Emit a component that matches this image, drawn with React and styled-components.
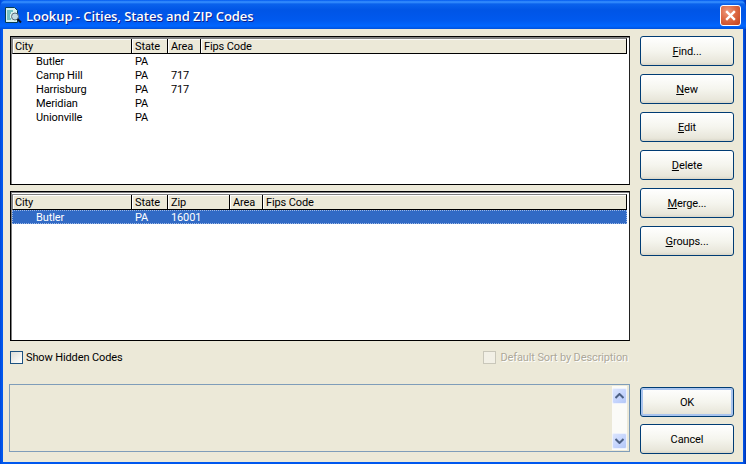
import React from 'react'
import styled, { createGlobalStyle } from 'styled-components'

const Global = createGlobalStyle`
  html, body { margin: 0; padding: 0; background: #0055e5; }
  * { box-sizing: border-box; }
`

const Window = styled.div`
  width: 746px;
  height: 464px;
  display: flex;
  flex-direction: column;
  overflow: hidden;
  font-family: Roboto, "Liberation Sans", Arial, sans-serif;
  font-size: 11px;
  letter-spacing: -0.12px;
  color: #000;
  background: linear-gradient(90deg, #0047d8 0, #0058ee 2px, #0058ee 743px, #0032b0 746px);
`

const TitleBar = styled.div`
  height: 29px;
  flex: none;
  display: flex;
  align-items: center;
  padding: 2px 5px 0 5px;
  border-radius: 7px 7px 0 0;
  background: linear-gradient(180deg, #0058ee 0, #3a93ff 2px, #0a62ec 4px, #0055e6 10px, #0059ee 20px, #0066ff 26px, #0051dc 29px);
`

const TitleText = styled.span`
  margin-left: 4px;
  flex: 1;
  color: #fff;
  font-family: "Open Sans", sans-serif;
  font-size: 13px;
  font-weight: 600;
  letter-spacing: -0.05px;
  text-shadow: 1px 1px 0 #0f1f8a;
`

const CloseButton = styled.div`
  width: 21px;
  height: 21px;
  display: flex;
  align-items: center;
  justify-content: center;
  border: 1px solid #fff;
  border-radius: 3px;
  background: radial-gradient(circle at 35% 30%, #ef9a7e 0, #dd6a44 45%, #c2401c 100%);
`

const Body = styled.div`
  flex: 1;
  margin: 0 3px 3px;
  padding: 7px 9px 8px 7px;
  display: flex;
  gap: 10px;
  background: #ece9d8;
`

const LeftColumn = styled.div`
  width: 620px;
  display: flex;
  flex-direction: column;
`

const RightColumn = styled.div`
  width: 94px;
  display: flex;
  flex-direction: column;
  gap: 8px;
`

const ListBox = styled.div`
  height: ${p => p.$h}px;
  margin-bottom: ${p => p.$mb}px;
  border: 1px solid #000;
  border-right-color: #222;
  background: #fff;
  padding: ${p => p.$pt}px 2px 0 1px;
  box-shadow: inset 1px 1px 0 #808080;
`

const Row = styled.div`
  display: grid;
  grid-template-columns: ${p => p.$cols};
  height: 14px;
  line-height: 16px;
  white-space: nowrap;
  color: ${p => (p.$selected ? '#fff' : '#000')};
  background: ${p => (p.$selected ? '#316ac5' : 'transparent')};
  outline: ${p => (p.$selected ? '1px dotted #9db8e6' : 'none')};
  outline-offset: -1px;
  & > span:first-child { padding-left: 24px; }
  & > span { padding-left: 4px; }
`

const HeaderRow = styled.div`
  display: grid;
  grid-template-columns: ${p => p.$cols};
  height: 16px;
  background: #ece9d8;
  border: 1px solid #000;
  border-left-color: #808080;
  border-top-color: #808080;
  box-shadow: inset 1px 1px 0 #fff;
`

const HeaderCell = styled.div`
  padding-left: 3px;
  line-height: 16px;
  height: 14px;
  border-right: 1px solid #000;
  box-shadow: 1px 0 0 #fff;
  &:first-child { padding-left: 2px; }
  &:last-child { border-right: none; box-shadow: none; }
`

const CheckRow = styled.div`
  margin-top: 10px;
  height: 13px;
  display: flex;
  align-items: center;
  justify-content: space-between;
  padding-right: 2px;
`

const CheckLabel = styled.label`
  display: flex;
  align-items: center;
  gap: ${p => (p.$disabled ? 4 : 3)}px;
  color: ${p => (p.$disabled ? '#aca899' : '#000')};
  ${p => p.$disabled && 'text-shadow: 1px 1px 0 #fff;'}
`

const CheckBox = styled.span`
  width: 13px;
  height: 13px;
  border: 1px solid ${p => (p.$disabled ? '#c9c7ba' : '#1c5180')};
  background: ${p => (p.$disabled ? '#f2f0e6' : 'linear-gradient(135deg, #dcdcd7 0, #f6f6f3 70%, #fff 100%)')};
`

const MessageBox = styled.div`
  margin-top: 20px;
  margin-left: -1px;
  height: 68px;
  width: 621px;
  display: flex;
  justify-content: flex-end;
  border: 1px solid #7f9db9;
  padding: 1px 2px 1px 0;
`

const ScrollBar = styled.div`
  width: 15px;
  display: flex;
  flex-direction: column;
  justify-content: space-between;
  padding: 2px 0 1px;
  background: #fbfbf8;
`

const ScrollButton = styled.div`
  height: 16px;
  display: flex;
  align-items: center;
  justify-content: center;
  border: 1px solid #eef2fd;
  border-radius: 2px;
  background: linear-gradient(135deg, #dbe5fd 0, #c3d3fd 60%, #b4c8f6 100%);
`

const Button = styled.button`
  width: 94px;
  height: 30px;
  flex: none;
  padding: 1px 0 0;
  margin-top: ${p => p.$top || 0}px;
  font: inherit;
  letter-spacing: inherit;
  color: #000;
  border: 1px solid #003c74;
  border-radius: 3px;
  background: linear-gradient(180deg, #fff 0, #f5f5ee 50%, #e8e6da 90%, #d9d6c8 100%);
  box-shadow: ${p => (p.$primary ? 'inset 0 0 0 2px #a9c4ee' : 'none')};
  u { text-decoration: underline; }
`

const cols1 = '119px 36px 33px 1fr'
const cols2 = '119px 36px 62px 33px 1fr'

const cities = [
  ['Butler', 'PA', ''],
  ['Camp Hill', 'PA', '717'],
  ['Harrisburg', 'PA', '717'],
  ['Meridian', 'PA', ''],
  ['Unionville', 'PA', ''],
]

const LookupIcon = () => (
  <svg width="17" height="17" viewBox="0 0 17 17">
    <path d="M0.5 0.5h9l3 3v12h-12z" fill="#d8f2f0" stroke="#063c50" />
    <path d="M2 4h6M2 6h4M2 8h3M2 10h3M2 12h4" stroke="#0f8f96" strokeWidth="1" />
    <circle cx="10" cy="9.5" r="3.5" fill="#c3dbe4" stroke="#5b6b78" />
    <path d="M12.5 12l3.5 3.5" stroke="#10141c" strokeWidth="2" />
  </svg>
)

const Arrow = ({ down }) => (
  <svg width="9" height="6" viewBox="0 0 9 6">
    <path d={down ? 'M0.5 1L4.5 5L8.5 1' : 'M0.5 5L4.5 1L8.5 5'} fill="none" stroke="#4d6185" strokeWidth="2" />
  </svg>
)

export default function App() {
  return (
    <Window>
      <Global />
      <TitleBar>
        <LookupIcon />
        <TitleText>Lookup - Cities, States and ZIP Codes</TitleText>
        <CloseButton>
          <svg width="13" height="13" viewBox="0 0 12 12">
            <path d="M2 2l8 8M10 2l-8 8" stroke="#fff" strokeWidth="2.2" />
          </svg>
        </CloseButton>
      </TitleBar>
      <Body>
        <LeftColumn>
          <ListBox $h={149} $mb={6} $pt={1}>
            <HeaderRow $cols={cols1}>
              <HeaderCell>City</HeaderCell>
              <HeaderCell>State</HeaderCell>
              <HeaderCell>Area</HeaderCell>
              <HeaderCell>Fips Code</HeaderCell>
            </HeaderRow>
            {cities.map(c => (
              <Row key={c[0]} $cols={cols1}>
                <span>{c[0]}</span>
                <span>{c[1]}</span>
                <span>{c[2]}</span>
                <span />
              </Row>
            ))}
          </ListBox>
          <ListBox $h={150} $mb={0} $pt={2}>
            <HeaderRow $cols={cols2}>
              <HeaderCell>City</HeaderCell>
              <HeaderCell>State</HeaderCell>
              <HeaderCell>Zip</HeaderCell>
              <HeaderCell>Area</HeaderCell>
              <HeaderCell>Fips Code</HeaderCell>
            </HeaderRow>
            <Row $cols={cols2} $selected>
              <span>Butler</span>
              <span>PA</span>
              <span>16001</span>
              <span />
              <span />
            </Row>
          </ListBox>
          <CheckRow>
            <CheckLabel>
              <CheckBox />
              Show Hidden Codes
            </CheckLabel>
            <CheckLabel $disabled>
              <CheckBox $disabled />
              Default Sort by Description
            </CheckLabel>
          </CheckRow>
          <MessageBox>
            <ScrollBar>
              <ScrollButton><Arrow /></ScrollButton>
              <ScrollButton><Arrow down /></ScrollButton>
            </ScrollBar>
          </MessageBox>
        </LeftColumn>
        <RightColumn>
          <Button><u>F</u>ind...</Button>
          <Button><u>N</u>ew</Button>
          <Button><u>E</u>dit</Button>
          <Button><u>D</u>elete</Button>
          <Button><u>M</u>erge...</Button>
          <Button><u>G</u>roups...</Button>
          <Button $top={123} $primary>OK</Button>
          <Button $top={-1}>Cancel</Button>
        </RightColumn>
      </Body>
    </Window>
  )
}
